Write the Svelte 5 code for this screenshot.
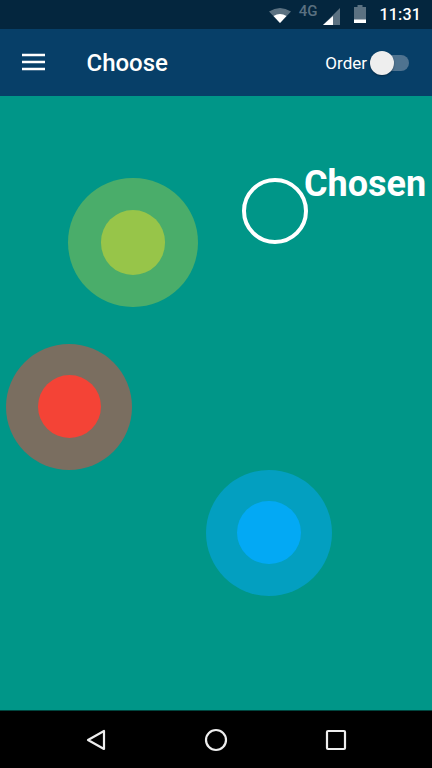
<script>
	const targets = [
		{ id: 'lime', x: 68, y: 81.5, outer: 129.5, inner: 64.5 },
		{ id: 'red', x: 6, y: 247.5, outer: 126, inner: 63 },
		{ id: 'blue', x: 206, y: 373.5, outer: 126, inner: 63.5 }
	];
</script>

<div class="screen">
	<div class="status">
		<svg class="wifi" width="24" height="16" viewBox="0 0 24 16">
			<path d="M1 4.5 Q12 -2.5 23 4.5 L12 16 Z" fill="#fff" fill-opacity="0.35" />
			<path d="M5.5 9 Q12 5 18.5 9 L12 16 Z" fill="#fff" />
		</svg>
		<span class="net">4G</span>
		<svg class="signal" width="18" height="18" viewBox="0 0 18 18">
			<path d="M17 1 V18 H0 Z" fill="#fff" fill-opacity="0.35" />
			<path d="M10 9 V18 H0 Z" fill="#fff" />
		</svg>
		<svg class="battery" width="12" height="18" viewBox="0 0 12 18">
			<path d="M3.5 0 H8.5 V2 H12 V18 H0 V2 H3.5 Z" fill="#fff" fill-opacity="0.35" />
			<rect x="0" y="14.5" width="12" height="3.5" fill="#fff" />
		</svg>
		<span class="clock">11:31</span>
	</div>

	<header class="bar">
		<svg class="menu" width="23" height="18" viewBox="0 0 23 18">
			<path d="M0 2 H23 M0 9 H23 M0 16 H23" stroke="#fff" stroke-width="2.4" />
		</svg>
		<h1>Choose</h1>
		<label class="order">
			Order
			<span class="switch"><span class="thumb"></span></span>
		</label>
	</header>

	<main class="stage">
		{#each targets as t}
			<div class="target {t.id}" style="left: {t.x}px; top: {t.y}px; width: {t.outer}px; height: {t.outer}px;">
				<div class="core" style="width: {t.inner}px; height: {t.inner}px;"></div>
			</div>
		{/each}
		<div class="ring"></div>
		<div class="chosen">Chosen</div>
	</main>

	<nav class="nav">
		<svg width="24" height="24" viewBox="0 0 24 24">
			<path d="M20 3 V21 L4 12 Z" fill="none" stroke="#eee" stroke-width="2.2" stroke-linejoin="round" />
		</svg>
		<svg width="24" height="24" viewBox="0 0 24 24">
			<circle cx="12" cy="12" r="10" fill="none" stroke="#eee" stroke-width="2.2" />
		</svg>
		<svg width="24" height="24" viewBox="0 0 24 24">
			<rect x="3" y="3" width="18" height="18" rx="1" fill="none" stroke="#eee" stroke-width="2.2" />
		</svg>
	</nav>
</div>

<style>
:global(body) {
	margin: 0;
	background: #000;
}

.screen {
	display: flex;
	flex-direction: column;
	width: 432px;
	height: 768px;
	overflow: hidden;
	font-family: Roboto, "Liberation Sans", sans-serif;
	color: #fff;
}

.status {
	display: flex;
	align-items: center;
	justify-content: flex-end;
	height: 29px;
	flex: none;
	padding-right: 11px;
	box-sizing: border-box;
	background: #04263e;
}

.wifi {
	margin-right: 7px;
}

.net {
	font-size: 15px;
	font-weight: 500;
	color: rgba(255, 255, 255, 0.35);
	margin-right: 6px;
	margin-top: -8px;
}

.signal {
	margin-right: 13px;
	margin-top: 2px;
}

.battery {
	margin-right: 13px;
	margin-top: -1px;
}

.clock {
	font-size: 16px;
	font-weight: 500;
	letter-spacing: 0.2px;
}

.bar {
	display: flex;
	align-items: center;
	height: 67px;
	flex: none;
	padding: 0 23px 0 22px;
	background: #073f68;
}

.menu {
	flex: none;
	margin-top: -1px;
}

h1 {
	margin: 0 0 0 41.5px;
	font-size: 24px;
	font-weight: 500;
	flex: 1;
}

.order {
	display: flex;
	align-items: center;
	gap: 4px;
	font-size: 17px;
}

.switch {
	position: relative;
	display: block;
	width: 38px;
	height: 16px;
	border-radius: 8px;
	background: #4f7390;
}

.thumb {
	position: absolute;
	left: -1px;
	top: -4px;
	width: 24px;
	height: 24px;
	border-radius: 50%;
	background: #eee;
	box-shadow: 0 1px 2px rgba(0, 0, 0, 0.35);
}

.stage {
	position: relative;
	flex: 1;
	background: #009688;
}

.target {
	position: absolute;
	display: flex;
	align-items: center;
	justify-content: center;
	border-radius: 50%;
}

.core {
	border-radius: 50%;
}

.lime {
	background: #4aad6a;
}

.lime .core {
	background: #97c549;
}

.red {
	background: #7a6e60;
}

.red .core {
	background: #f44336;
}

.blue {
	background: #039fc0;
}

.blue .core {
	background: #03a9f4;
}

.ring {
	position: absolute;
	left: 242px;
	top: 82px;
	width: 66px;
	height: 66px;
	box-sizing: border-box;
	border: 4px solid #fff;
	border-radius: 50%;
}

.chosen {
	position: absolute;
	left: 304px;
	top: 66px;
	font-size: 36px;
	font-weight: 700;
	line-height: 44px;
	white-space: nowrap;
}

.nav {
	display: flex;
	align-items: center;
	justify-content: space-between;
	height: 58px;
	flex: none;
	box-sizing: border-box;
	padding: 0 84px;
	border-top: 1px solid #00453e;
	background: #000;
}
</style>
